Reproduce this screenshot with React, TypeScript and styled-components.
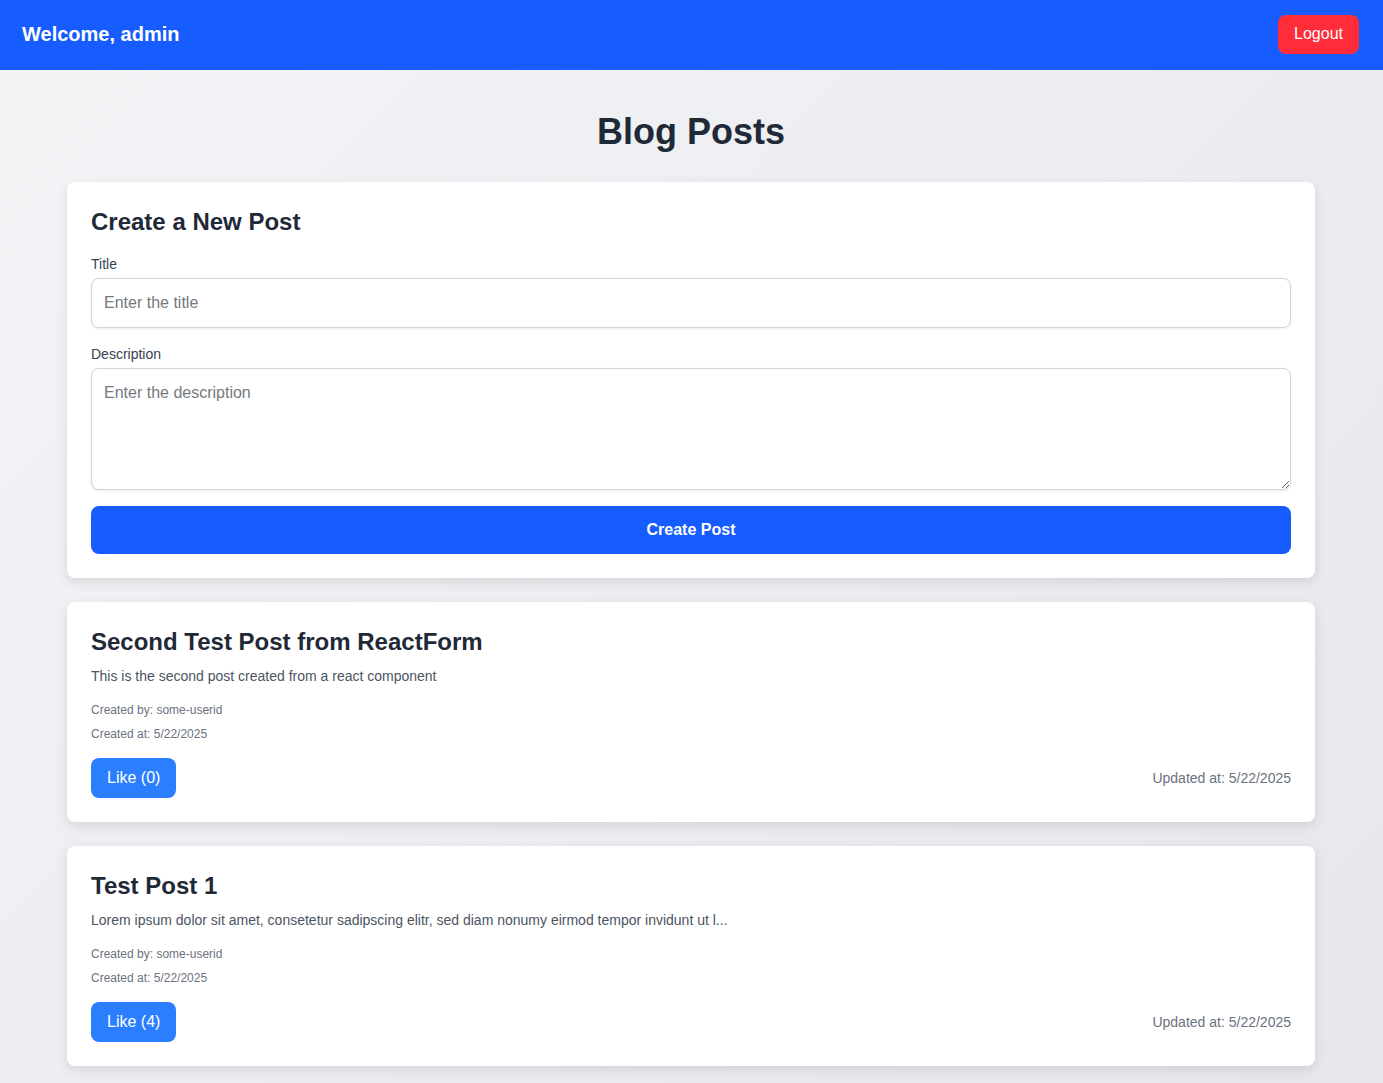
import React from "react";
import styled, { createGlobalStyle } from "styled-components";

const GlobalStyle = createGlobalStyle`
  * {
    box-sizing: border-box;
  }

  body {
    margin: 0;
    font-family: "Liberation Sans", Arial, sans-serif;
    background: linear-gradient(135deg, #f3f4f6 0%, #e5e7eb 100%);
    min-height: 100vh;
  }
`;

const posts = [
  {
    id: 2,
    title: "Second Test Post from ReactForm",
    description: "This is the second post created from a react component",
    createdBy: "some-userid",
    createdAt: "5/22/2025",
    updatedAt: "5/22/2025",
    likes: 0,
  },
  {
    id: 1,
    title: "Test Post 1",
    description:
      "Lorem ipsum dolor sit amet, consetetur sadipscing elitr, sed diam nonumy eirmod tempor invidunt ut l...",
    createdBy: "some-userid",
    createdAt: "5/22/2025",
    updatedAt: "5/22/2025",
    likes: 4,
  },
];

export default function App() {
  return (
    <>
      <GlobalStyle />
      <Header>
        <Welcome>Welcome, admin</Welcome>
        <LogoutButton>Logout</LogoutButton>
      </Header>

      <Main>
        <PageTitle>Blog Posts</PageTitle>

        <Card>
          <CardTitle>Create a New Post</CardTitle>
          <Field>
            <Label htmlFor="title">Title</Label>
            <Input id="title" placeholder="Enter the title" />
          </Field>
          <Field>
            <Label htmlFor="description">Description</Label>
            <TextArea id="description" rows={4} placeholder="Enter the description" />
          </Field>
          <SubmitButton>Create Post</SubmitButton>
        </Card>

        {posts.map((post) => (
          <Card key={post.id}>
            <CardTitle>{post.title}</CardTitle>
            <Description>{post.description}</Description>
            <Meta>
              <MetaLine>Created by: {post.createdBy}</MetaLine>
              <MetaLine>Created at: {post.createdAt}</MetaLine>
            </Meta>
            <Footer>
              <LikeButton>Like ({post.likes})</LikeButton>
              <Updated>Updated at: {post.updatedAt}</Updated>
            </Footer>
          </Card>
        ))}
      </Main>
    </>
  );
}

const Header = styled.header`
  height: 70px;
  padding: 0 22px 2px;
  display: flex;
  align-items: center;
  justify-content: space-between;
  background: #175cff;
`;

const Welcome = styled.h2`
  margin: 0;
  font-size: 20px;
  font-weight: 700;
  color: #ffffff;
`;

const LogoutButton = styled.button`
  height: 39px;
  padding: 0 16px;
  border: none;
  border-radius: 8px;
  background: #ff2d3a;
  color: #ffffff;
  font-family: inherit;
  font-size: 16px;
  margin-right: 2px;
  cursor: pointer;
`;

const Main = styled.main`
  padding: 42px 68px 24px 67px;
  display: flex;
  flex-direction: column;
  gap: 24px;
`;

const PageTitle = styled.h1`
  margin: 0 0 6px;
  text-align: center;
  font-size: 36px;
  line-height: 40px;
  font-weight: 700;
  color: #1f2937;
`;

const Card = styled.section`
  background: #ffffff;
  border-radius: 8px;
  padding: 24px;
  box-shadow: 0 4px 12px rgba(0, 0, 0, 0.1);
  display: flex;
  flex-direction: column;
`;

const CardTitle = styled.h2`
  margin: 0;
  font-size: 24px;
  line-height: 32px;
  font-weight: 700;
  color: #1f2937;
`;

const Field = styled.div`
  margin-top: 16px;
  display: flex;
  flex-direction: column;
  gap: 4px;
`;

const Label = styled.label`
  font-size: 14px;
  line-height: 20px;
  color: #374151;
`;

const inputStyles = `
  width: 100%;
  padding: 12px;
  border: 1px solid #d1d5db;
  border-radius: 8px;
  font-family: "Liberation Sans", Arial, sans-serif;
  font-size: 16px;
  line-height: 24px;
  color: #1f2937;
  box-shadow: 0 1px 3px rgba(0, 0, 0, 0.08);
  outline: none;

  &::placeholder {
    color: #757980;
  }
`;

const Input = styled.input`
  ${inputStyles}
  height: 50px;
`;

const TextArea = styled.textarea`
  ${inputStyles}
  height: 122px;
  display: block;
`;

const SubmitButton = styled.button`
  margin-top: 16px;
  width: 100%;
  padding: 12px;
  border: none;
  border-radius: 8px;
  background: #175cff;
  color: #ffffff;
  font-family: inherit;
  font-size: 16px;
  line-height: 24px;
  font-weight: 700;
  cursor: pointer;
`;

const Description = styled.p`
  margin: 8px 0 0;
  font-size: 14px;
  line-height: 20px;
  color: #4b5563;
`;

const Meta = styled.div`
  margin-top: 16px;
  display: flex;
  flex-direction: column;
  gap: 8px;
`;

const MetaLine = styled.p`
  margin: 0;
  font-size: 12px;
  line-height: 16px;
  color: #6b7280;
`;

const Footer = styled.div`
  margin-top: 16px;
  display: flex;
  align-items: center;
  justify-content: space-between;
`;

const LikeButton = styled.button`
  padding: 8px 16px;
  border: none;
  border-radius: 8px;
  background: #2b7fff;
  color: #ffffff;
  font-family: inherit;
  font-size: 16px;
  line-height: 24px;
  cursor: pointer;
`;

const Updated = styled.span`
  font-size: 14px;
  line-height: 20px;
  color: #6b7280;
`;
